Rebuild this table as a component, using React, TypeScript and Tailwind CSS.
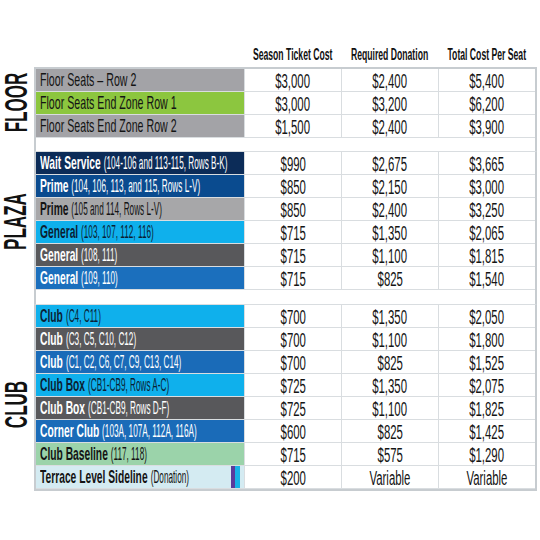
type Row = {
  bold?: string;
  rest?: string;
  plain?: string;
  bg: string;
  fg: string;
  vals: [string, string, string];
  bars?: boolean;
};

const GRAY = "bg-[#a3a3a7]";
const CYAN = "bg-[#0fb0ec]";
const DARK = "bg-[#58585b]";
const BLUE = "bg-[#1a6bb8]";
const INK = "text-[#0b1e33]";
const WHITE = "text-white";

const floor: Row[] = [
  { plain: "Floor Seats – Row 2", bg: GRAY, fg: "text-[#141414]", vals: ["$3,000", "$2,400", "$5,400"] },
  { plain: "Floor Seats End Zone Row 1", bg: "bg-[#8cc63f]", fg: "text-[#141414]", vals: ["$3,000", "$3,200", "$6,200"] },
  { plain: "Floor Seats End Zone Row 2", bg: GRAY, fg: "text-[#141414]", vals: ["$1,500", "$2,400", "$3,900"] },
];

const plaza: Row[] = [
  { bold: "Wait Service", rest: "(104-106 and 113-115, Rows B-K)", bg: "bg-[#0c2c58]", fg: WHITE, vals: ["$990", "$2,675", "$3,665"] },
  { bold: "Prime", rest: "(104, 106, 113, and 115, Rows L-V)", bg: "bg-[#0a4b8f]", fg: WHITE, vals: ["$850", "$2,150", "$3,000"] },
  { bold: "Prime", rest: "(105 and 114, Rows L-V)", bg: "bg-[#a7a7a9]", fg: "text-[#141414]", vals: ["$850", "$2,400", "$3,250"] },
  { bold: "General", rest: "(103, 107, 112, 116)", bg: CYAN, fg: INK, vals: ["$715", "$1,350", "$2,065"] },
  { bold: "General", rest: "(108, 111)", bg: DARK, fg: WHITE, vals: ["$715", "$1,100", "$1,815"] },
  { bold: "General", rest: "(109, 110)", bg: "bg-[#1b6fbd]", fg: WHITE, vals: ["$715", "$825", "$1,540"] },
];

const club: Row[] = [
  { bold: "Club", rest: "(C4, C11)", bg: CYAN, fg: INK, vals: ["$700", "$1,350", "$2,050"] },
  { bold: "Club", rest: "(C3, C5, C10, C12)", bg: DARK, fg: WHITE, vals: ["$700", "$1,100", "$1,800"] },
  { bold: "Club", rest: "(C1, C2, C6, C7, C9, C13, C14)", bg: BLUE, fg: WHITE, vals: ["$700", "$825", "$1,525"] },
  { bold: "Club Box", rest: "(CB1-CB9, Rows A-C)", bg: CYAN, fg: INK, vals: ["$725", "$1,350", "$2,075"] },
  { bold: "Club Box", rest: "(CB1-CB9, Rows D-F)", bg: DARK, fg: WHITE, vals: ["$725", "$1,100", "$1,825"] },
  { bold: "Corner Club", rest: "(103A, 107A, 112A, 116A)", bg: BLUE, fg: WHITE, vals: ["$600", "$825", "$1,425"] },
  { bold: "Club Baseline", rest: "(117, 118)", bg: "bg-[#9bd3aa]", fg: "text-[#141414]", vals: ["$715", "$575", "$1,290"] },
  { bold: "Terrace Level Sideline", rest: "(Donation)", bg: "bg-[#d4ebf2]", fg: "text-[#141414]", vals: ["$200", "Variable", "Variable"], bars: true },
];

function Label({ row }: { row: Row }) {
  if (row.plain) {
    return <span className="inline-block origin-left scale-x-[0.56] text-[19px] leading-none">{row.plain}</span>;
  }
  return (
    <span className="inline-block origin-left scale-x-[0.54] text-[19px] leading-none">
      <b className="font-bold">{row.bold}</b>{" "}
      <span className="inline-block origin-left scale-x-[0.8]">{row.rest}</span>
    </span>
  );
}

function TableRow({ row }: { row: Row }) {
  return (
    <div className="flex h-[23px] border-b border-[#d9dde0]">
      <div className={`flex w-[208px] items-center overflow-hidden ${row.bg} ${row.fg}`}>
        <div className="min-w-0 flex-1 overflow-hidden whitespace-nowrap pl-[4px] pt-[1px]">
          <Label row={row} />
        </div>
        {row.bars && (
          <div className="mr-[4px] flex h-full shrink-0">
            <div className="w-[4px] bg-[#5a3b9b]" />
            <div className="w-[5px] bg-[#17b2e6]" />
          </div>
        )}
      </div>
      {row.vals.map((v, i) => (
        <div key={i} className="flex w-[97px] items-center justify-center border-l border-[#d9dde0] pt-[1px] text-[#151515]">
          <span className="inline-block scale-x-[0.57] text-[20px] leading-none whitespace-nowrap">{v}</span>
        </div>
      ))}
    </div>
  );
}

function Section({ name, rows, top, pad }: { name: string; rows: Row[]; top?: boolean; pad?: string }) {
  return (
    <div className="flex">
      <div className={`flex w-[34px] items-center justify-center ${pad ?? ""}`}>
        <span className="inline-block -rotate-90 whitespace-nowrap">
          <span className="inline-block scale-x-[0.55] text-[31px] font-bold leading-none text-[#111]">{name}</span>
        </span>
      </div>
      <div className={`w-[503px] border-x-2 border-[#c7ccd0] ${top ? "border-t-2" : ""}`}>
        {rows.map((r, i) => (
          <TableRow key={i} row={r} />
        ))}
      </div>
    </div>
  );
}

function Spacer({ h }: { h: string }) {
  return <div className={`ml-[34px] w-[503px] border-x-2 border-b border-[#c7ccd0] border-b-[#d9dde0] ${h}`} />;
}

export default function App() {
  const heads = ["Season Ticket Cost", "Required Donation", "Total Cost Per Seat"];
  return (
    <div className="h-[540px] w-[540px] bg-white pt-[44px] font-['Liberation_Sans',Arial,sans-serif]">
      <div className="ml-[34px] flex h-[23px] w-[503px] items-end pb-[4px] pl-[210px]">
        {heads.map((h) => (
          <div key={h} className="flex w-[97px] justify-center">
            <span className="inline-block scale-x-[0.54] whitespace-nowrap text-[16px] font-bold leading-none text-[#111]">{h}</span>
          </div>
        ))}
      </div>
      <Section name="FLOOR" rows={floor} top />
      <Spacer h="h-[14px]" />
      <Section name="PLAZA" rows={plaza} />
      <Spacer h="h-[15px]" />
      <div className="[&>div>div:last-child]:border-b-2">
        <Section name="CLUB" rows={club} pad="pt-3" />
      </div>
    </div>
  );
}
